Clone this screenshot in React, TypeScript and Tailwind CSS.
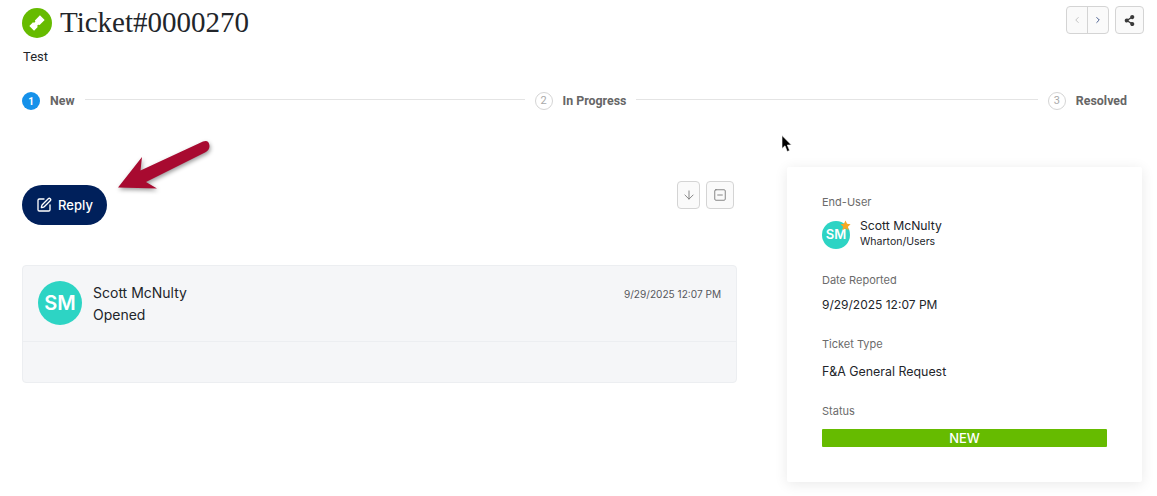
import { ArrowDown, ChevronLeft, ChevronRight, SquareMinus, SquarePen } from "lucide-react";
import { FaShareAlt } from "react-icons/fa";

const inter = "font-['Inter',sans-serif]";
const roboto = "font-['Roboto',sans-serif]";

function Step({ n, label, active }: { n: number; label: string; active?: boolean }) {
  return (
    <div className="flex items-center shrink-0">
      <span
        className={
          active
            ? `flex h-[18px] w-[18px] items-center justify-center rounded-full bg-[#1591ea] text-[10px] font-bold text-white ${roboto}`
            : `flex h-[18px] w-[18px] items-center justify-center rounded-full border border-[#d5d5d5] text-[11px] text-[#a9a9a9] ${roboto}`
        }
      >
        {n}
      </span>
      <span className={`ml-[10px] pt-px text-[12.4px] font-bold text-[#666666] ${roboto}`}>{label}</span>
    </div>
  );
}

export default function App() {
  return (
    <div className={`relative h-[496px] w-[1157px] overflow-hidden bg-white ${inter}`}>
      <div className="flex flex-col pl-[22px] pr-[13px]">
        {/* Header */}
        <div className="flex h-[40px] items-start justify-between pt-[5px]">
          <div className="flex items-center">
            <span className="flex h-[30px] w-[30px] items-center justify-center rounded-full bg-[#66bb00]">
              <svg viewBox="0 0 24 24" className="h-[20px] w-[20px]">
                <path
                  fill="#fff"
                  transform="rotate(-45 12 12)"
                  d="M3 8h6.2a1.6 1.6 0 0 0 3.2 0H21v8H12.4a1.6 1.6 0 0 0-3.2 0H3z"
                />
              </svg>
            </span>
            <h1 className="-mt-px ml-[8px] font-['Liberation_Serif',serif] text-[29px] leading-[36px] text-[#22252a]">
              Ticket#0000270
            </h1>
          </div>
          <div className="mt-[1px] flex gap-[6px]">
            <div className="flex h-[28px] w-[43px] rounded-[4px] border border-[#d4d4d4] bg-[#fafafa]">
              <span className="flex flex-1 items-center justify-center border-r border-[#d4d4d4]">
                <ChevronLeft size={10} color="#b8b8b8" />
              </span>
              <span className="flex flex-1 items-center justify-center">
                <ChevronRight size={10} color="#27407a" />
              </span>
            </div>
            <span className="flex h-[28px] w-[29px] items-center justify-center rounded-[4px] border border-[#d4d4d4] bg-[#fafafa]">
              <FaShareAlt size={11} color="#3b3b3b" />
            </span>
          </div>
        </div>
        <p className={`ml-px mt-[7px] text-[13px] leading-[20px] text-[#22252a] ${roboto}`}>Test</p>

        {/* Stepper */}
        <div className="mt-[25px] flex h-[18px] items-center pr-[17px]">
          <Step n={1} label="New" active />
          <div className="ml-[10px] mr-[10px] h-px w-[440px] shrink-0 -translate-y-[2px] bg-[#e4e4e4]" />
          <Step n={2} label="In Progress" />
          <div className="mx-[10px] h-px flex-1 -translate-y-[2px] bg-[#e4e4e4]" />
          <Step n={3} label="Resolved" />
        </div>

        {/* Body */}
        <div className="mt-[57px] flex items-start">
          <div className="w-[715px]">
            <div className="flex items-start justify-between pr-[3px] pt-[14px]">
              <button className="mt-[4px] flex h-[40px] w-[85px] items-center justify-center gap-[6px] rounded-full bg-[#00205b] text-[13px] font-medium text-white">
                <SquarePen size={16} />
                <span className="pt-[2px]">Reply</span>
              </button>
              <div className="flex gap-[6px]">
                <span className="flex h-[28px] w-[23px] items-center justify-center rounded-[4px] border border-[#d4d4d4] bg-[#fafafa]">
                  <ArrowDown size={14} color="#777777" strokeWidth={1.5} />
                </span>
                <span className="flex h-[28px] w-[28px] items-center justify-center rounded-[4px] border border-[#d4d4d4] bg-[#fafafa]">
                  <SquareMinus size={14} color="#777777" strokeWidth={1.5} />
                </span>
              </div>
            </div>

            <div className="mt-[40px] h-[118px] rounded-[4px] border border-[#eceef1] bg-[#f5f6f8]">
              <div className="flex h-[76px] items-start justify-between border-b border-[#eceef1] pl-[15px] pr-[15px] pt-[15px]">
                <div className="flex">
                  <span className="flex h-[44px] w-[44px] items-center justify-center rounded-full bg-[#2dd4c4] text-[20px] font-semibold text-white">
                    SM
                  </span>
                  <div className="ml-[11px] pt-px text-[14px] leading-[22px] text-[#22252a]">
                    <div>Scott McNulty</div>
                    <div>Opened</div>
                  </div>
                </div>
                <span className="mt-[5px] text-[10.1px] leading-[16px] text-[#55585d]">9/29/2025 12:07 PM</span>
              </div>
            </div>
          </div>

          {/* Side card */}
          <aside className="ml-[50px] h-[315px] w-[355px] rounded-[2px] bg-white px-[35px] pt-[28px] shadow-[0_2px_14px_rgba(0,0,0,0.09)]">
            <div className="text-[11px] leading-[14px] text-[#6b6b6b]">End-User</div>
            <div className="mt-[10px] flex items-center">
              <span className="relative flex h-[28px] w-[28px] items-center justify-center rounded-full bg-[#2dd4c4] text-[13px] font-semibold text-white">
                SM
                <svg viewBox="0 0 24 24" className="absolute -right-[1px] -top-[1px] h-[11px] w-[11px]">
                  <path fill="#f7a823" d="M12 1l3.4 7.3 7.6.9-5.6 5.3 1.5 7.9L12 18.4l-6.9 4 1.5-7.9L1 9.2l7.6-.9z" />
                </svg>
              </span>
              <div className="-mt-px ml-[10px] text-[#22252a]">
                <div className="text-[12.2px] leading-[16px]">Scott McNulty</div>
                <div className="text-[10.5px] leading-[16px]">Wharton/Users</div>
              </div>
            </div>
            <div className="mt-[23px] text-[11px] leading-[14px] text-[#6b6b6b]">Date Reported</div>
            <div className="mt-[8px] text-[12px] leading-[20px] text-[#22252a]">9/29/2025 12:07 PM</div>
            <div className="mt-[22px] text-[11px] leading-[14px] text-[#6b6b6b]">Ticket Type</div>
            <div className="mt-[11px] text-[12.4px] leading-[20px] text-[#22252a]">F&amp;A General Request</div>
            <div className="mt-[22px] text-[11px] leading-[14px] text-[#6b6b6b]">Status</div>
            <div className="mt-[11px] flex h-[18px] items-center justify-center rounded-[1px] bg-[#66bb00] pt-px text-[13px] font-medium text-white">
              NEW
            </div>
          </aside>
        </div>
      </div>

      {/* Annotation arrow drawn over the screenshot */}
      <svg className="absolute left-[110px] top-[135px] h-[65px] w-[105px] drop-shadow-[1px_2px_2px_rgba(0,0,0,0.4)]" viewBox="110 135 105 65">
        <path d="M118 187.5L142 157L140.5 170.5L203 141.5Q209 139.5 209.5 146Q209.5 150 205 152.5L146 182L157 188.5Z" fill="#a80a30" />
      </svg>

      {/* Mouse cursor */}
      <svg className="absolute left-[781px] top-[135px] h-[18px] w-[12px]" viewBox="0 0 12 18">
        <path d="M1 0.5V13.5L4 10.8L6.2 16.5L8.6 15.5L6.3 10H10.4Z" fill="#000" stroke="#fff" strokeWidth="0.6" />
      </svg>
    </div>
  );
}
